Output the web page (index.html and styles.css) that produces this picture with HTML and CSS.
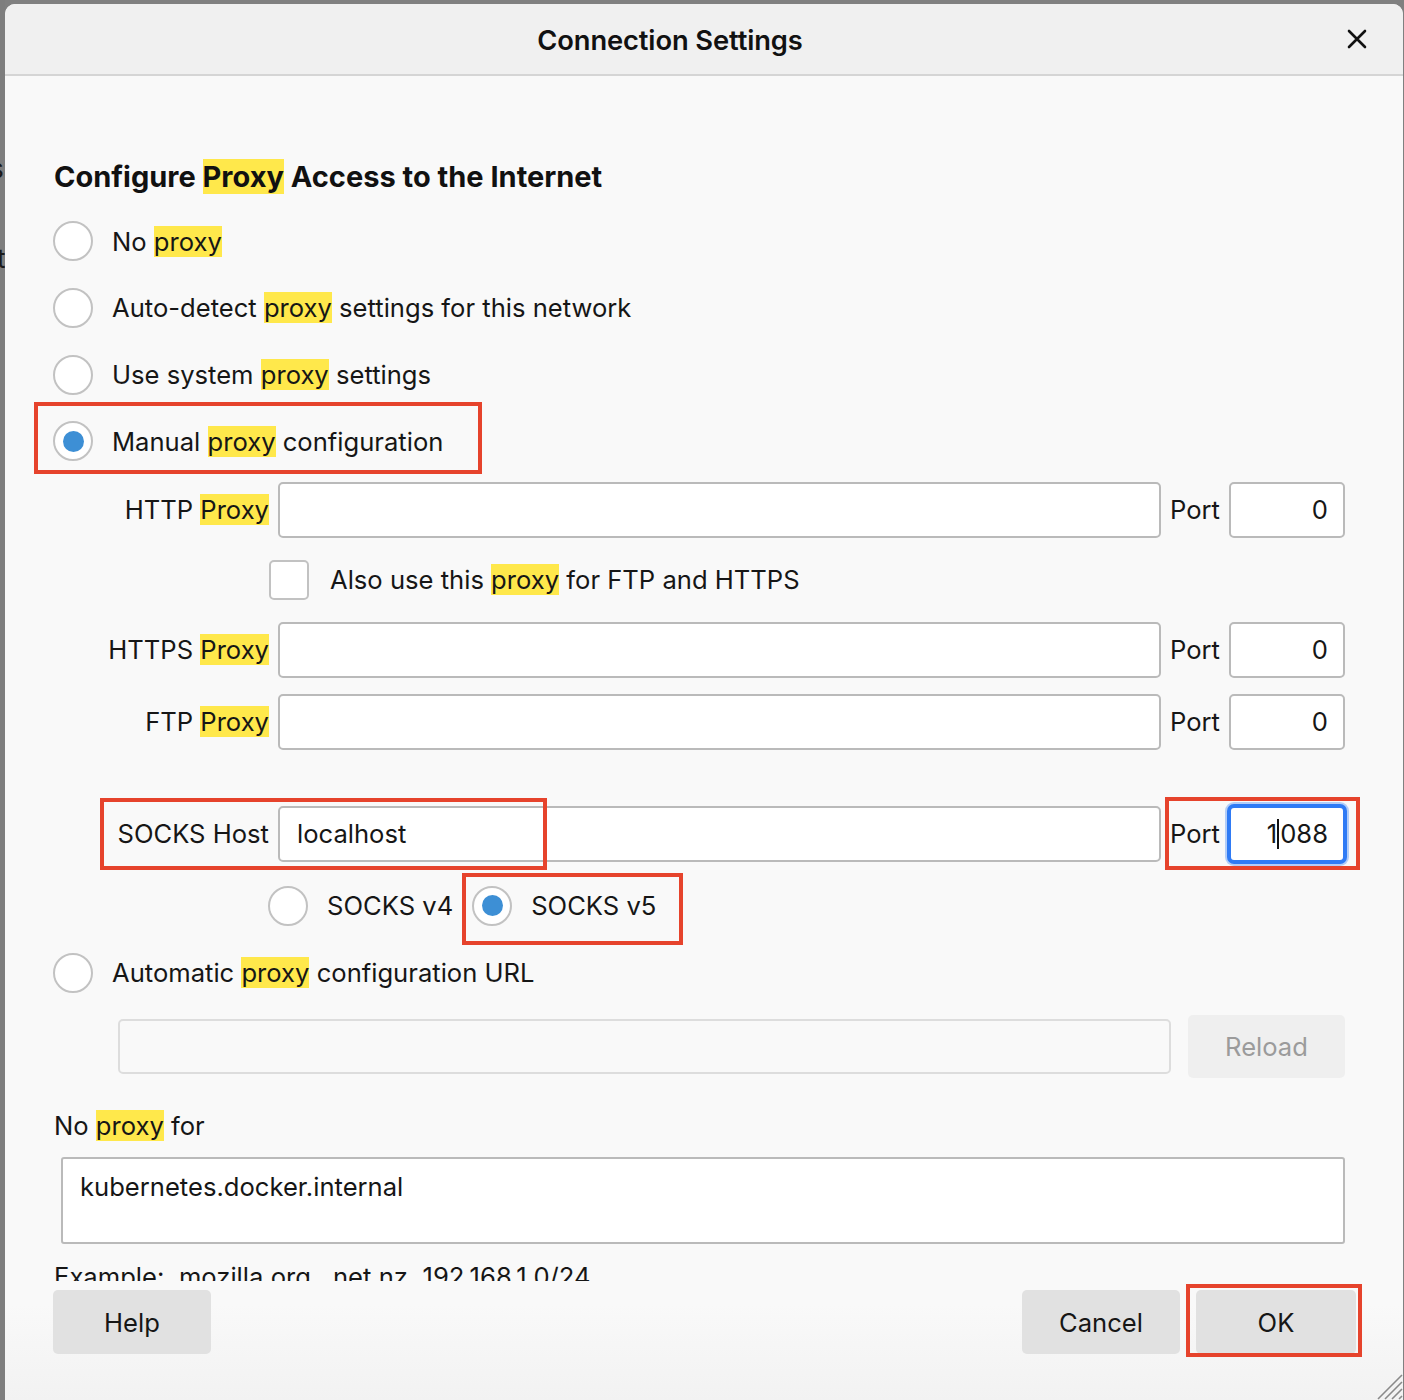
FILE: index.html
```html
<!DOCTYPE html>
<html lang="en">
<head>
<meta charset="utf-8">
<title>Connection Settings</title>
<link rel="stylesheet" href="styles.css">
</head>
<body>
<div class="backdrop-strip">
  <span class="bg-s">s</span>
  <span class="bg-t">t</span>
</div>
<div class="dialog">
  <header class="titlebar">
    <h1 class="title">Connection Settings</h1>
    <span class="close" aria-label="Close">
      <svg width="22" height="22" viewBox="0 0 22 22"><path d="M3 3 L19 19 M19 3 L3 19" stroke="#111" stroke-width="2.6" stroke-linecap="round" fill="none"/></svg>
    </span>
  </header>
  <div class="content">
    <h2 class="heading">Configure <mark>Proxy</mark> Access to the Internet</h2>
    <div class="radio-list">
      <div class="radio-row"><span class="radio"></span><span class="label">No <mark>proxy</mark></span></div>
      <div class="radio-row"><span class="radio"></span><span class="label">Auto-detect <mark>proxy</mark> settings for this network</span></div>
      <div class="radio-row"><span class="radio"></span><span class="label">Use system <mark>proxy</mark> settings</span></div>
      <div class="radio-row anchor"><span class="radio checked"></span><span class="label">Manual <mark>proxy</mark> configuration</span><span class="annot annot-manual"></span></div>
    </div>

    <div class="proxy-row http-row">
      <span class="plabel">HTTP <mark>Proxy</mark></span>
      <span class="field"></span>
      <span class="port-label">Port</span>
      <span class="field port">0</span>
    </div>
    <div class="check-row">
      <span class="checkbox"></span><span class="label">Also use this <mark>proxy</mark> for FTP and HTTPS</span>
    </div>
    <div class="proxy-row">
      <span class="plabel">HTTPS <mark>Proxy</mark></span>
      <span class="field"></span>
      <span class="port-label">Port</span>
      <span class="field port">0</span>
    </div>
    <div class="proxy-row ftp-row">
      <span class="plabel">FTP <mark>Proxy</mark></span>
      <span class="field"></span>
      <span class="port-label">Port</span>
      <span class="field port">0</span>
    </div>
    <div class="proxy-row socks-row anchor">
      <span class="plabel">SOCKS Host</span>
      <span class="field host">localhost</span>
      <span class="port-label">Port</span>
      <span class="field port focused">1<span class="caret"></span>088</span>
      <span class="annot annot-host"></span>
      <span class="annot annot-port"></span>
    </div>
    <div class="version-row anchor">
      <span class="radio"></span><span class="label v4">SOCKS v4</span>
      <span class="radio checked"></span><span class="label">SOCKS v5</span>
      <span class="annot annot-v5"></span>
    </div>
    <div class="radio-row"><span class="radio"></span><span class="label">Automatic <mark>proxy</mark> configuration URL</span></div>
    <div class="url-row">
      <span class="field disabled"></span>
      <span class="btn reload">Reload</span>
    </div>
    <div class="noproxy-label">No <mark>proxy</mark> for</div>
    <div class="textarea">kubernetes.docker.internal</div>
    <div class="example">Example: .mozilla.org, .net.nz, 192.168.1.0/24</div>
  </div>
  <footer class="buttons">
    <span class="btn">Help</span>
    <span class="spacer"></span>
    <span class="btn">Cancel</span>
    <span class="btn ok anchor">OK<span class="annot annot-ok"></span></span>
  </footer>
  <svg class="grip" width="30" height="30" viewBox="0 0 30 30">
    <path d="M29 5 L5 29 M29 12 L12 29 M29 19 L19 29 M29 26 L26 29" stroke="#8a8a8a" stroke-width="1.6" fill="none"/>
  </svg>
</div>
</body>
</html>
```

FILE: styles.css
```css
html, body {
  margin: 0;
  padding: 0;
  overflow: hidden;
}

body {
  width: 1404px;
  height: 1400px;
  background: #808080;
  display: flex;
  align-items: flex-start;
  font-family: "Inter", "Noto Sans", sans-serif;
  color: #161616;
}

.backdrop-strip {
  width: 5px;
  height: 1400px;
  overflow: hidden;
  flex: none;
  display: flex;
  flex-direction: column;
  font-size: 26px;
  color: #1a1a1a;
  background: #7e7e7e;
}

.bg-s {
  display: block;
  margin-top: 152px;
  margin-left: -10px;
  line-height: 34px;
}

.bg-t {
  display: block;
  margin-top: 56px;
  margin-left: -3px;
  line-height: 34px;
}

.dialog {
  width: 1398px;
  height: 1396px;
  margin-top: 4px;
  background: linear-gradient(#f9f9f9 0, #f9f9f9 1300px, #f2f2f2 1396px);
  border-radius: 10px 10px 0 0;
  overflow: hidden;
  position: relative;
  display: flex;
  flex-direction: column;
  flex: none;
}

.titlebar {
  height: 70px;
  flex: none;
  background: #f0f0f0;
  border-bottom: 2px solid #d5d5d5;
  display: flex;
  align-items: center;
  justify-content: center;
  padding-right: 68px;
  padding-top: 2px;
  box-sizing: border-box;
  height: 72px;
  position: relative;
}

.title {
  margin: 0;
  font-size: 27.3px;
  font-weight: 600;
  letter-spacing: -0.1px;
  color: #111;
}

.close {
  position: absolute;
  right: 35px;
  top: 24px;
  width: 22px;
  height: 22px;
  display: block;
}

.close svg { display: block; }

.content {
  height: 1205px;
  flex: none;
  overflow: hidden;
  padding: 0 58px 0 49px;
  box-sizing: border-box;
  font-size: 25.6px;
}

mark {
  background: #ffe84b;
  color: inherit;
}

.heading {
  margin: 81px 0 0 0;
  height: 40px;
  line-height: 40px;
  font-size: 29px;
  font-weight: 700;
  color: #111;
}

.radio-list {
  margin-top: 11px;
}

.radio-row {
  height: 66.67px;
  display: flex;
  align-items: center;
}

.anchor {
  position: relative;
}

.radio {
  width: 40px;
  height: 40px;
  box-sizing: border-box;
  border: 2px solid #c2c2c2;
  border-radius: 50%;
  background: #fff;
  flex: none;
  margin-left: -1px;
  display: flex;
  align-items: center;
  justify-content: center;
}

.radio.checked::after {
  content: "";
  width: 21px;
  height: 21px;
  border-radius: 50%;
  background: #3d8fd5;
}

.label {
  margin-left: 19px;
  white-space: nowrap;
}

.proxy-row {
  display: grid;
  grid-template-columns: 215px 1fr 50px 116px;
  column-gap: 9px;
  height: 56px;
  align-items: center;
}

.http-row { margin-top: 7px; }
.ftp-row { margin-top: 16px; }
.socks-row { margin-top: 56px; }

.plabel {
  text-align: right;
  white-space: nowrap;
}

.port-label {
  white-space: nowrap;
}

.field {
  height: 56px;
  box-sizing: border-box;
  border: 2px solid #bababa;
  border-radius: 5px;
  background: #fff;
  display: flex;
  align-items: center;
  padding: 0 15px 0 17px;
}

.field.port {
  justify-content: flex-end;
}

.field.focused {
  border-color: #2f7bf5;
  box-shadow: 0 0 0 2px #2f7bf5, 0 0 0 4px rgba(47, 123, 245, 0.35);
}

.caret {
  display: inline-block;
  width: 2px;
  height: 30px;
  background: #111;
  margin: 0 1px 0 0;
}

.check-row {
  height: 84px;
  display: flex;
  align-items: center;
  padding-left: 215px;
}

.checkbox {
  width: 40px;
  height: 40px;
  box-sizing: border-box;
  border: 2px solid #c2c2c2;
  border-radius: 5px;
  background: #fff;
  flex: none;
}

.check-row .label {
  margin-left: 21px;
}

.version-row {
  margin-top: 10px;
  height: 68px;
  display: flex;
  align-items: center;
  padding-left: 215px;
}

.version-row .label {
  margin-left: 19px;
}

.version-row .label.v4 {
  margin-right: 20px;
}

.url-row {
  margin-top: 9px;
  height: 63px;
  display: flex;
  align-items: center;
  gap: 17px;
  padding-left: 64px;
}

.field.disabled {
  flex: 1;
  height: 55px;
  background: #f9f9f9;
  border-color: #dddddd;
}

.btn {
  height: 63px;
  box-sizing: border-box;
  border-radius: 5px;
  background: #e1e1e1;
  display: flex;
  align-items: center;
  justify-content: center;
  flex: none;
  color: #161616;
  font-size: 25.6px;
}

.btn.reload {
  width: 157px;
  background: #efefef;
  color: #9b9b9b;
}

.noproxy-label {
  margin-top: 31px;
  height: 34px;
  line-height: 34px;
}

.textarea {
  margin-top: 14px;
  margin-left: 7px;
  height: 87px;
  box-sizing: border-box;
  border: 2px solid #bababa;
  border-radius: 3px;
  background: #fff;
  padding: 9px 17px;
  line-height: 38px;
}

.example {
  margin-top: 16px;
  line-height: 34px;
  white-space: nowrap;
}

.buttons {
  display: flex;
  padding: 9px 47px 0 48px;
  gap: 16px;
}

.buttons .btn {
  width: 158px;
  height: 64px;
}

.buttons .btn.ok {
  width: 160px;
}

.spacer { flex: 1; }

.annot {
  position: absolute;
  border: 4px solid #e6432c;
  box-sizing: border-box;
  pointer-events: none;
}

.annot-manual {
  left: -20px;
  top: -6px;
  width: 448px;
  height: 72px;
}

.annot-host {
  left: 46px;
  top: -8px;
  width: 447px;
  height: 72px;
}

.annot-port {
  right: -15px;
  top: -9px;
  width: 195px;
  height: 73px;
}

.annot-v5 {
  left: 408px;
  top: 1px;
  width: 221px;
  height: 72px;
}

.annot-ok {
  left: -10px;
  top: -6px;
  right: -6px;
  bottom: -3px;
}

.grip {
  position: absolute;
  right: 0;
  bottom: 0;
}
```
